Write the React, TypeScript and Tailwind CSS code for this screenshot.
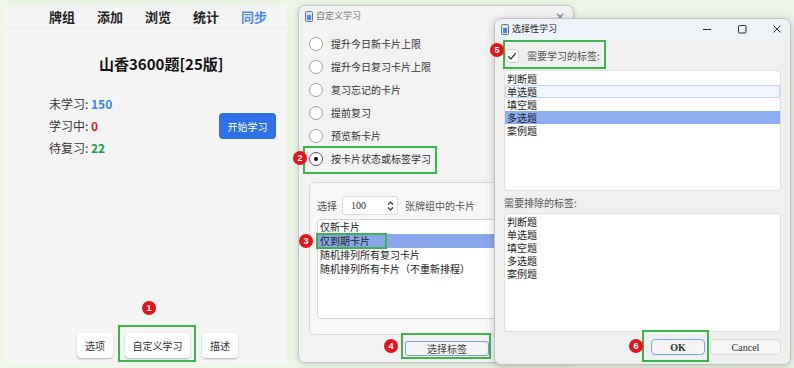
import type { ReactNode } from "react";

function Badge({ n, className }: { n: number; className: string }) {
  return (
    <span
      className={`absolute z-10 flex size-[14px] items-center justify-center rounded-full bg-[#e5141b] font-['Liberation_Sans',sans-serif] text-[9px] font-bold leading-none text-white ${className}`}
    >
      {n}
    </span>
  );
}

function GreenBox({ className }: { className: string }) {
  return (
    <span
      className={`pointer-events-none absolute border-2 border-[#3cb44c] ${className}`}
    />
  );
}

function AppIcon() {
  return (
    <svg width="8" height="11" viewBox="0 0 8 11" aria-hidden>
      <rect x="0.5" y="0.5" width="7" height="10" rx="1" fill="#dfe3ea" stroke="#6b7280" />
      <rect x="2" y="4" width="4" height="5" rx="0.5" fill="#3f8ae0" />
    </svg>
  );
}

function PlainButton({ children, w }: { children: ReactNode; w: string }) {
  return (
    <button
      type="button"
      className={`flex h-[25px] items-center justify-center rounded-[4px] bg-white text-[10px] text-[#333] shadow-[0_1px_2px_rgba(0,0,0,0.25)] ${w}`}
    >
      {children}
    </button>
  );
}

const modes = [
  "提升今日新卡片上限",
  "提升今日复习卡片上限",
  "复习忘记的卡片",
  "提前复习",
  "预览新卡片",
];

const cardFilters = [
  "仅新卡片",
  "仅到期卡片",
  "随机排列所有复习卡片",
  "随机排列所有卡片（不重新排程）",
];

const tags = ["判断题", "单选题", "填空题", "多选题", "案例题"];

function DeckPanel() {
  return (
    <div className="ml-[5px] mt-[5px] flex h-[359px] w-[281px] shrink-0 flex-col bg-[#f4f4f4] font-['Noto_Sans_CJK_SC',sans-serif]">
      <nav className="flex h-[24px] items-center gap-[22px] border-b border-[#e8e8e8] pl-[44px] text-[13px] font-bold text-[#222]">
        <span>牌组</span>
        <span>添加</span>
        <span>浏览</span>
        <span>统计</span>
        <span className="text-[#4a8af4]">同步</span>
      </nav>
      <h1 className="mt-[25px] pl-[94px] text-[15px] font-bold leading-[20px] text-[#111]">
        山香3600题[25版]
      </h1>
      <div className="mt-[19px] flex items-center pl-[44px] pr-[10px]">
        <div className="flex flex-col text-[12px] leading-[22px] text-[#333]">
          <p>
            未学习: <span className="font-bold text-[#3b82f6]">150</span>
          </p>
          <p>
            学习中: <span className="font-bold text-[#e11d24]">0</span>
          </p>
          <p>
            待复习: <span className="font-bold text-[#16a34a]">22</span>
          </p>
        </div>
        <button
          type="button"
          className="ml-auto h-[26px] w-[57px] rounded-[4px] bg-[#2f6fe8] text-[10px] text-white"
        >
          开始学习
        </button>
      </div>
      <div className="mb-[6px] mt-auto flex items-end gap-[12px] pl-[72px]">
        <PlainButton w="w-[36px]">选项</PlainButton>
        <div className="relative">
          <PlainButton w="w-[65px]">自定义学习</PlainButton>
          <GreenBox className="-left-[7px] -top-[8px] h-[37px] w-[78px]" />
          <Badge n={1} className="left-[17px] -top-[32px]" />
        </div>
        <PlainButton w="w-[36px]">描述</PlainButton>
      </div>
    </div>
  );
}

function CustomStudyWindow() {
  return (
    <div className="absolute left-[12px] top-[5px] h-[358px] w-[276px] rounded-[7px] border border-[#c6c6c6] bg-[#f3f3f3] font-['Noto_Sans_CJK_SC',sans-serif] shadow-[0_1px_6px_rgba(0,0,0,0.15)]">
      <div className="flex h-[20px] items-center gap-[3px] pl-[6px] text-[9px] text-[#777]">
        <AppIcon />
        <span>自定义学习</span>
        <span className="ml-auto mr-[8px] text-[12px] leading-none text-[#888]">✕</span>
      </div>
      <div className="mt-[6px] flex flex-col pl-[10px] text-[10px] text-[#333]">
        {modes.map((m) => (
          <div key={m} className="flex h-[23px] items-center gap-[8px]">
            <span className="size-[14px] rounded-full border border-[#a3a3a3] bg-white" />
            <span>{m}</span>
          </div>
        ))}
        <div className="relative flex h-[23px] items-center gap-[8px]">
          <span className="flex size-[14px] items-center justify-center rounded-full border border-[#555] bg-white">
            <span className="size-[4px] rounded-full bg-black" />
          </span>
          <span>按卡片状态或标签学习</span>
          <GreenBox className="-left-[6px] -top-[1px] h-[28px] w-[134px]" />
          <Badge n={2} className="-left-[16px] top-[4px]" />
        </div>
      </div>
      <div className="ml-[10px] mt-[12px] h-[153px] w-[254px] rounded-[5px] border border-[#dadada] bg-[#f7f7f7] px-[7px] text-[10px] text-[#555]">
        <div className="mt-[13px] flex h-[19px] items-center">
          <span>选择</span>
          <div className="ml-[5px] flex h-[19px] w-[56px] items-center rounded-[3px] border border-[#dcdcdc] bg-white pl-[8px] pr-[3px]">
            <span className="font-['Liberation_Serif',serif] text-[10px] text-[#333]">100</span>
            <svg className="ml-auto" width="7" height="12" viewBox="0 0 7 12" aria-hidden>
              <path d="M1 4.5 3.5 2 6 4.5M1 7.5 3.5 10 6 7.5" fill="none" stroke="#333" strokeWidth="1.1" />
            </svg>
          </div>
          <span className="ml-[7px]">张牌组中的卡片</span>
        </div>
        <div className="mt-[4px] h-[100px] rounded-[4px] border border-[#d6d6d6] bg-white text-[10px] leading-[14px] text-[#222]">
          {cardFilters.map((f) =>
            f === "仅到期卡片" ? (
              <div key={f} className="relative h-[14px] bg-[#8aa6ea] pl-[2px]">
                {f}
                <GreenBox className="-left-[2px] -top-[1px] h-[16px] w-[71px]" />
                <Badge n={3} className="-left-[19px] top-0" />
              </div>
            ) : (
              <div key={f} className="h-[14px] pl-[2px]">
                {f}
              </div>
            ),
          )}
        </div>
      </div>
      <div className="relative ml-[106px] mt-[6px] w-[84px]">
        <button
          type="button"
          className="flex h-[15px] w-[84px] items-center justify-center rounded-[3px] border border-[#7b9ee0] bg-[#f4f4f4] text-[10px] text-[#444]"
        >
          选择标签
        </button>
        <GreenBox className="-left-[4px] -top-[8px] h-[26px] w-[90px]" />
        <Badge n={4} className="-left-[21px] -top-[2px]" />
      </div>
    </div>
  );
}

function TagList({ focus, selected }: { focus?: string; selected?: string }) {
  return (
    <div className="flex flex-col pt-[1px] text-[10px] leading-[13px] text-[#222]">
      {tags.map((t) => {
        if (t === selected)
          return (
            <div key={t} className="h-[13px] bg-[#8eaeef] pl-[2px]">
              {t}
            </div>
          );
        if (t === focus)
          return (
            <div key={t} className="h-[13px] border border-[#c5d5f2] bg-[#f1f5fd] pl-[1px] leading-[11px]">
              {t}
            </div>
          );
        return (
          <div key={t} className="h-[13px] pl-[2px]">
            {t}
          </div>
        );
      })}
    </div>
  );
}

function SelectiveStudyWindow() {
  return (
    <div className="absolute left-[208px] top-[18px] flex h-[347px] w-[297px] flex-col rounded-[7px] border border-[#c2c2c2] bg-[#f0f0f0] font-['Noto_Sans_CJK_SC',sans-serif] shadow-[0_2px_10px_rgba(0,0,0,0.2)]">
      <div className="flex h-[20px] shrink-0 items-center gap-[3px] rounded-t-[7px] bg-[#eef2f9] pl-[6px] text-[9px] text-[#222]">
        <AppIcon />
        <span>选择性学习</span>
        <svg className="ml-auto" width="10" height="10" viewBox="0 0 10 10" aria-hidden>
          <path d="M1 5.5h8" stroke="#333" strokeWidth="1" />
        </svg>
        <svg className="ml-[22px]" width="10" height="10" viewBox="0 0 10 10" aria-hidden>
          <rect x="1.5" y="1.5" width="7.5" height="7.5" rx="1" fill="none" stroke="#333" strokeWidth="1" />
        </svg>
        <svg className="ml-[22px] mr-[8px]" width="10" height="10" viewBox="0 0 10 10" aria-hidden>
          <path d="M1.5 1.5 8.5 8.5M8.5 1.5 1.5 8.5" stroke="#333" strokeWidth="1" />
        </svg>
      </div>
      <div className="flex flex-col px-[9px]">
        <div className="relative ml-[1px] mt-[9px] flex h-[15px] items-center gap-[8px] text-[10px] text-[#555]">
          <span className="flex size-[14px] items-center justify-center rounded-[3px] border border-[#d0d0d0] bg-white">
            <svg width="10" height="10" viewBox="0 0 10 10" aria-hidden>
              <path d="M1.2 5.3 3.8 7.9 8.9 2.2" fill="none" stroke="#222" strokeWidth="1.2" />
            </svg>
          </span>
          <span>需要学习的标签:</span>
          <GreenBox className="-left-[2px] -top-[8px] h-[29px] w-[103px]" />
          <Badge n={5} className="-left-[15px] -top-[5px]" />
        </div>
        <div className="mt-[7px] h-[121px] rounded-[4px] border border-[#e0e0e0] bg-white">
          <TagList focus="单选题" selected="多选题" />
        </div>
        <p className="mt-[6px] text-[10px] leading-[12px] text-[#555]">需要排除的标签:</p>
        <div className="mt-[4px] h-[119px] rounded-[4px] border border-[#e0e0e0] bg-white">
          <TagList />
        </div>
        <div className="mt-[7px] flex justify-end gap-[5px] font-['Liberation_Serif',serif] text-[10px] text-[#333]">
          <div className="relative">
            <button
              type="button"
              className="h-[16px] w-[54px] rounded-[4px] border border-[#7fa3e6] bg-[#f4f4f4] font-semibold"
            >
              OK
            </button>
            <GreenBox className="-left-[9px] -top-[9px] h-[32px] w-[67px]" />
            <Badge n={6} className="-left-[22px] top-0" />
          </div>
          <button
            type="button"
            className="h-[16px] w-[71px] rounded-[4px] border border-[#dcdcdc] bg-[#f6f6f6]"
          >
            Cancel
          </button>
        </div>
      </div>
    </div>
  );
}

export default function App() {
  return (
    <div className="flex h-[368px] w-[794px] overflow-hidden bg-[#edf5e6]">
      <DeckPanel />
      <div className="relative h-full flex-1">
        <CustomStudyWindow />
        <SelectiveStudyWindow />
      </div>
    </div>
  );
}
